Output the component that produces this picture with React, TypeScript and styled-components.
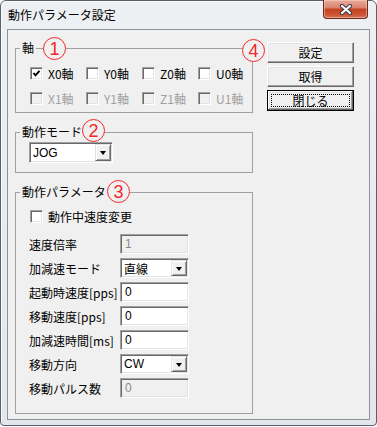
import React from "react";
import styled, { createGlobalStyle } from "styled-components";

const GlobalStyle = createGlobalStyle`
  html, body {
    margin: 0;
    padding: 0;
    background: #ffffff;
  }
  body {
    font-family: "Noto Sans CJK JP", "Noto Sans", sans-serif;
    font-size: 12px;
    color: #000;
  }
  * {
    box-sizing: border-box;
  }
`;

const Window = styled.div`
  width: 377px;
  height: 426px;
  border: 1px solid #5b6068;
  border-radius: 6px 6px 4px 4px;
  background: linear-gradient(#eef1f4, #e3e6ea);
  box-shadow: inset 1px 1px 0 #fbfcfd;
  padding: 0 6px 5px 6px;
  display: flex;
  flex-direction: column;
`;

const TitleBar = styled.div`
  height: 28px;
  display: flex;
  align-items: flex-start;
  justify-content: space-between;
  flex-shrink: 0;
`;

const Title = styled.span`
  padding: 6px 0 0 1px;
  font-size: 12px;
  line-height: 16px;
  color: #000;
`;

const CloseButton = styled.div`
  width: 45px;
  height: 19px;
  margin: -1px 2px 0 0;
  border: 1px solid #6b2a1c;
  border-top: none;
  border-radius: 0 0 4px 4px;
  background: linear-gradient(#e9ac9d 0%, #dc8470 42%, #c4421f 52%, #cc5434 80%, #d8735a 100%);
  box-shadow: inset 0 0 0 1px rgba(255, 220, 210, 0.45);
  display: flex;
  align-items: center;
  justify-content: center;

  svg {
    display: block;
  }
`;

const Client = styled.div`
  flex: 1;
  border: 1px solid #8e9299;
  background: #f0f0f0;
  display: grid;
  grid-template-columns: 238px 87px;
  column-gap: 14px;
  align-items: start;
  padding: 11px 0 0 7px;
`;

const LeftColumn = styled.div`
  display: flex;
  flex-direction: column;
  gap: 12px;
`;

const Group = styled.fieldset<{ $height: number }>`
  margin: 0;
  padding: 0;
  height: ${(p) => p.$height}px;
  border: 1px solid #a0a0a0;
  min-width: 0;
`;

const Legend = styled.legend`
  position: relative;
  margin-left: 4px;
  padding: 0 2px;
  font-size: 12px;
  line-height: 14px;
`;

const GroupBody = styled.div<{ $pad: string }>`
  padding: ${(p) => p.$pad};
`;

const Mark = styled.span<{ $x: number; $y: number }>`
  position: absolute;
  left: ${(p) => p.$x}px;
  top: ${(p) => p.$y}px;
  width: 23px;
  height: 23px;
  border: 1.3px solid #f2272b;
  border-radius: 50%;
  background: #f0f0f0;
  color: #f2272b;
  font-family: "Liberation Sans", Arial, sans-serif;
  font-size: 18px;
  line-height: 1;
  display: flex;
  align-items: center;
  justify-content: center;
  padding-top: 1px;
`;

const AxisGrid = styled.div`
  display: grid;
  grid-template-columns: repeat(4, 56px);
  row-gap: 5px;
`;

const CheckLabel = styled.label<{ $disabled?: boolean }>`
  height: 20px;
  display: flex;
  align-items: center;
  gap: 5px;
  padding-left: 1px;
  color: ${(p) => (p.$disabled ? "#a0a0a0" : "#000")};
  white-space: nowrap;
`;

const CheckBox = styled.span<{ $disabled?: boolean }>`
  width: 13px;
  height: 13px;
  flex-shrink: 0;
  border: 1px solid;
  border-color: #a0a0a0 #ffffff #ffffff #a0a0a0;
  box-shadow: inset 1px 1px 0 #696969, inset -1px -1px 0 #e3e3e3;
  background: ${(p) => (p.$disabled ? "#f0f0f0" : "#ffffff")};
  display: flex;
  align-items: center;
  justify-content: center;

  svg {
    display: block;
  }
`;

const Sunken = styled.div<{ $width: number; $height: number; $disabled?: boolean }>`
  width: ${(p) => p.$width}px;
  height: ${(p) => p.$height}px;
  border: 1px solid;
  border-color: #a0a0a0 #ffffff #ffffff #a0a0a0;
  box-shadow: inset 1px 1px 0 #696969, inset -1px -1px 0 #e3e3e3;
  background: ${(p) => (p.$disabled ? "#f0f0f0" : "#ffffff")};
  color: ${(p) => (p.$disabled ? "#8a8a8a" : "#000")};
  display: flex;
  align-items: stretch;
  padding: 1px;
`;

const FieldText = styled.span`
  flex: 1;
  padding: 1px 0 0 3px;
  font-size: 12px;
  line-height: 14px;
  font-family: "Liberation Sans", "Noto Sans CJK JP", sans-serif;
  overflow: hidden;
`;

const ComboText = styled.span`
  flex: 1;
  display: flex;
  align-items: center;
  padding-left: 2px;
  font-size: 12px;
  font-family: "Liberation Sans", "Noto Sans CJK JP", sans-serif;
`;

const DropButton = styled.span`
  width: 16px;
  border: 1px solid;
  border-color: #e3e3e3 #696969 #696969 #e3e3e3;
  box-shadow: inset 1px 1px 0 #ffffff, inset -1px -1px 0 #a0a0a0;
  background: #f0f0f0;
  display: flex;
  align-items: center;
  justify-content: center;

  &::after {
    content: "";
    width: 0;
    height: 0;
    border-left: 3.5px solid transparent;
    border-right: 3.5px solid transparent;
    border-top: 4px solid #000;
    margin-top: 1px;
  }
`;

const ParamGrid = styled.div`
  margin-top: 8px;
  display: grid;
  grid-template-columns: 91px 69px;
  grid-auto-rows: 20px;
  row-gap: 4px;
`;

const ParamLabel = styled.span`
  display: flex;
  align-items: center;
  white-space: nowrap;
  font-size: 12px;
  padding-top: 1px;
`;

const ButtonColumn = styled.div`
  position: relative;
  margin-top: 1px;
  display: flex;
  flex-direction: column;
  gap: 3px;
`;

const Button = styled.button<{ $default?: boolean }>`
  width: 87px;
  height: 21px;
  margin: 0;
  padding: 0;
  font-family: "Noto Sans CJK JP", sans-serif;
  font-size: 12px;
  color: #000;
  background: #f0f0f0;
  border: 1px solid;
  border-color: ${(p) => (p.$default ? "#000" : "#ffffff #696969 #696969 #ffffff")};
  box-shadow: ${(p) =>
    p.$default
      ? "inset -1px -1px 0 #696969, inset 1px 1px 0 #ffffff, inset -2px -2px 0 #a0a0a0, inset 2px 2px 0 #e3e3e3"
      : "inset -1px -1px 0 #a0a0a0, inset 1px 1px 0 #e3e3e3"};
  outline: ${(p) => (p.$default ? "1px dotted #000" : "none")};
  outline-offset: -5px;
`;

const Check = ({ label, checked, disabled }: { label: string; checked?: boolean; disabled?: boolean }) => (
  <CheckLabel $disabled={disabled}>
    <CheckBox $disabled={disabled}>
      {checked && (
        <svg width="9" height="9" viewBox="0 0 9 9">
          <polyline points="1.5,4 3.5,6.3 7.5,1.8" fill="none" stroke="#000" strokeWidth="1.9" />
        </svg>
      )}
    </CheckBox>
    {label}
  </CheckLabel>
);

const Combo = ({ value, width, height }: { value: string; width: number; height: number }) => (
  <Sunken $width={width} $height={height}>
    <ComboText>{value}</ComboText>
    <DropButton />
  </Sunken>
);

const Field = ({ value, disabled }: { value: string; disabled?: boolean }) => (
  <Sunken $width={69} $height={20} $disabled={disabled}>
    <FieldText>{value}</FieldText>
  </Sunken>
);

const axes = ["X", "Y", "Z", "U"];

export default function App() {
  return (
    <>
      <GlobalStyle />
      <Window>
        <TitleBar>
          <Title>動作パラメータ設定</Title>
          <CloseButton>
            <svg width="14" height="11" viewBox="0 0 14 11">
              <path d="M3 2 L11 9 M11 2 L3 9" stroke="#3a3a44" strokeWidth="4.2" strokeLinecap="round" />
              <path d="M3 2 L11 9 M11 2 L3 9" stroke="#ffffff" strokeWidth="2.2" strokeLinecap="round" />
            </svg>
          </CloseButton>
        </TitleBar>

        <Client>
          <LeftColumn>
            <Group $height={72}>
              <Legend>
                軸
                <Mark $x={23} $y={-4}>1</Mark>
              </Legend>
              <GroupBody $pad="8px 0 0 13px">
                <AxisGrid>
                  {axes.map((a, i) => (
                    <Check key={a + "0"} label={`${a}0軸`} checked={i === 0} />
                  ))}
                  {axes.map((a) => (
                    <Check key={a + "1"} label={`${a}1軸`} disabled />
                  ))}
                </AxisGrid>
              </GroupBody>
            </Group>

            <Group $height={48}>
              <Legend>
                動作モード
                <Mark $x={62} $y={-6}>2</Mark>
              </Legend>
              <GroupBody $pad="3px 0 0 13px">
                <Combo value="JOG" width={84} height={21} />
              </GroupBody>
            </Group>

            <Group $height={229}>
              <Legend>
                動作パラメータ
                <Mark $x={87} $y={-5}>3</Mark>
              </Legend>
              <GroupBody $pad="7px 0 0 13px">
                <Check label="動作中速度変更" />
                <ParamGrid>
                  <ParamLabel>速度倍率</ParamLabel>
                  <Field value="1" disabled />
                  <ParamLabel>加減速モード</ParamLabel>
                  <Combo value="直線" width={69} height={20} />
                  <ParamLabel>起動時速度[pps]</ParamLabel>
                  <Field value="0" />
                  <ParamLabel>移動速度[pps]</ParamLabel>
                  <Field value="0" />
                  <ParamLabel>加減速時間[ms]</ParamLabel>
                  <Field value="0" />
                  <ParamLabel>移動方向</ParamLabel>
                  <Combo value="CW" width={69} height={20} />
                  <ParamLabel>移動パルス数</ParamLabel>
                  <Field value="0" disabled />
                </ParamGrid>
              </GroupBody>
            </Group>
          </LeftColumn>

          <ButtonColumn>
            <Mark $x={-25} $y={-3}>4</Mark>
            <Button>設定</Button>
            <Button>取得</Button>
            <Button $default>閉じる</Button>
          </ButtonColumn>
        </Client>
      </Window>
    </>
  );
}
